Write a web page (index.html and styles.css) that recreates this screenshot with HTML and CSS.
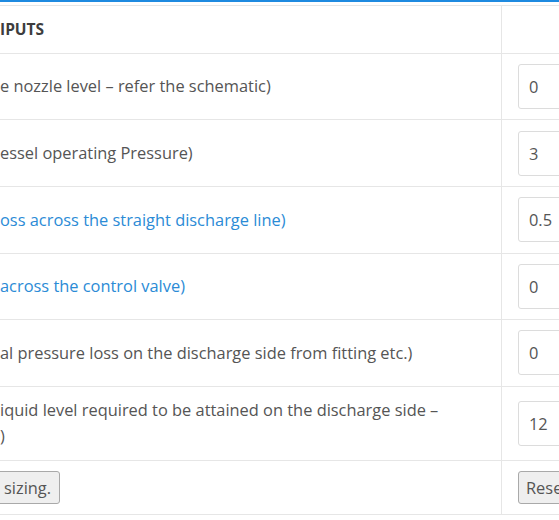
FILE: index.html
```html
<!DOCTYPE html>
<html>
<head>
<meta charset="utf-8">
<link rel="stylesheet" href="styles.css">
</head>
<body>
<div class="panel">
  <table class="inputs">
    <thead>
      <tr>
        <th class="label">IPUTS</th>
        <th class="value"></th>
      </tr>
    </thead>
    <tbody>
      <tr>
        <td class="label">e nozzle level – refer the schematic)</td>
        <td class="value"><input class="field" type="text" value="0"></td>
      </tr>
      <tr>
        <td class="label">essel operating Pressure)</td>
        <td class="value"><input class="field" type="text" value="3"></td>
      </tr>
      <tr>
        <td class="label link">oss across the straight discharge line)</td>
        <td class="value"><input class="field" type="text" value="0.5"></td>
      </tr>
      <tr>
        <td class="label link">across the control valve)</td>
        <td class="value"><input class="field" type="text" value="0"></td>
      </tr>
      <tr>
        <td class="label">al pressure loss on the discharge side from fitting etc.)</td>
        <td class="value"><input class="field" type="text" value="0"></td>
      </tr>
      <tr>
        <td class="label">iquid level required to be attained on the discharge side –<br>)</td>
        <td class="value"><input class="field" type="text" value="12"></td>
      </tr>
      <tr>
        <td class="label"><button class="btn btn-left" type="button">sizing.</button></td>
        <td class="value"><button class="btn" type="button">Reset</button></td>
      </tr>
    </tbody>
  </table>
</div>
</body>
</html>
```

FILE: styles.css
```css
html, body {
  margin: 0;
  padding: 0;
  overflow: hidden;
  background: #ffffff;
}

body {
  font-family: "Open Sans", "DejaVu Sans", sans-serif;
  font-size: 16.4px;
  color: #555555;
}

.panel {
  border-top: 2px solid #1e8ae0;
  padding-top: 3px;
  width: 720px;
}

.inputs {
  border-collapse: collapse;
  width: 720px;
  border-bottom: 1px solid #e6e6e6;
}

.inputs th,
.inputs td {
  border-top: 1px solid #e6e6e6;
  padding: 10.3px 0;
  line-height: 26.2px;
  text-align: left;
  vertical-align: middle;
}

.inputs th {
  font-size: 15.5px;
  font-weight: 700;
  color: #3d3d3d;
}

.inputs .label {
  width: 501px;
  padding-left: 0;
}

.inputs .value {
  border-left: 1px solid #e6e6e6;
  padding-left: 16px;
}

.link {
  color: #2b8bd6;
}

.field {
  box-sizing: border-box;
  display: block;
  width: 160px;
  height: 45px;
  margin: 0;
  padding: 0 10px;
  border: 1px solid #dcdcdc;
  border-radius: 3px;
  font-family: "Open Sans", "DejaVu Sans", sans-serif;
  font-size: 16.4px;
  color: #555555;
  background: #ffffff;
}

.btn {
  box-sizing: border-box;
  display: block;
  height: 33px;
  margin: 0;
  padding: 0 7px;
  border: 1px solid #a9a9a9;
  border-radius: 3px;
  background: #efefef;
  font-family: "Open Sans", "DejaVu Sans", sans-serif;
  font-size: 16.4px;
  color: #555555;
  line-height: 31px;
}

.btn-left {
  margin-left: -8px;
  padding-left: 11px;
  padding-right: 8px;
}
```
